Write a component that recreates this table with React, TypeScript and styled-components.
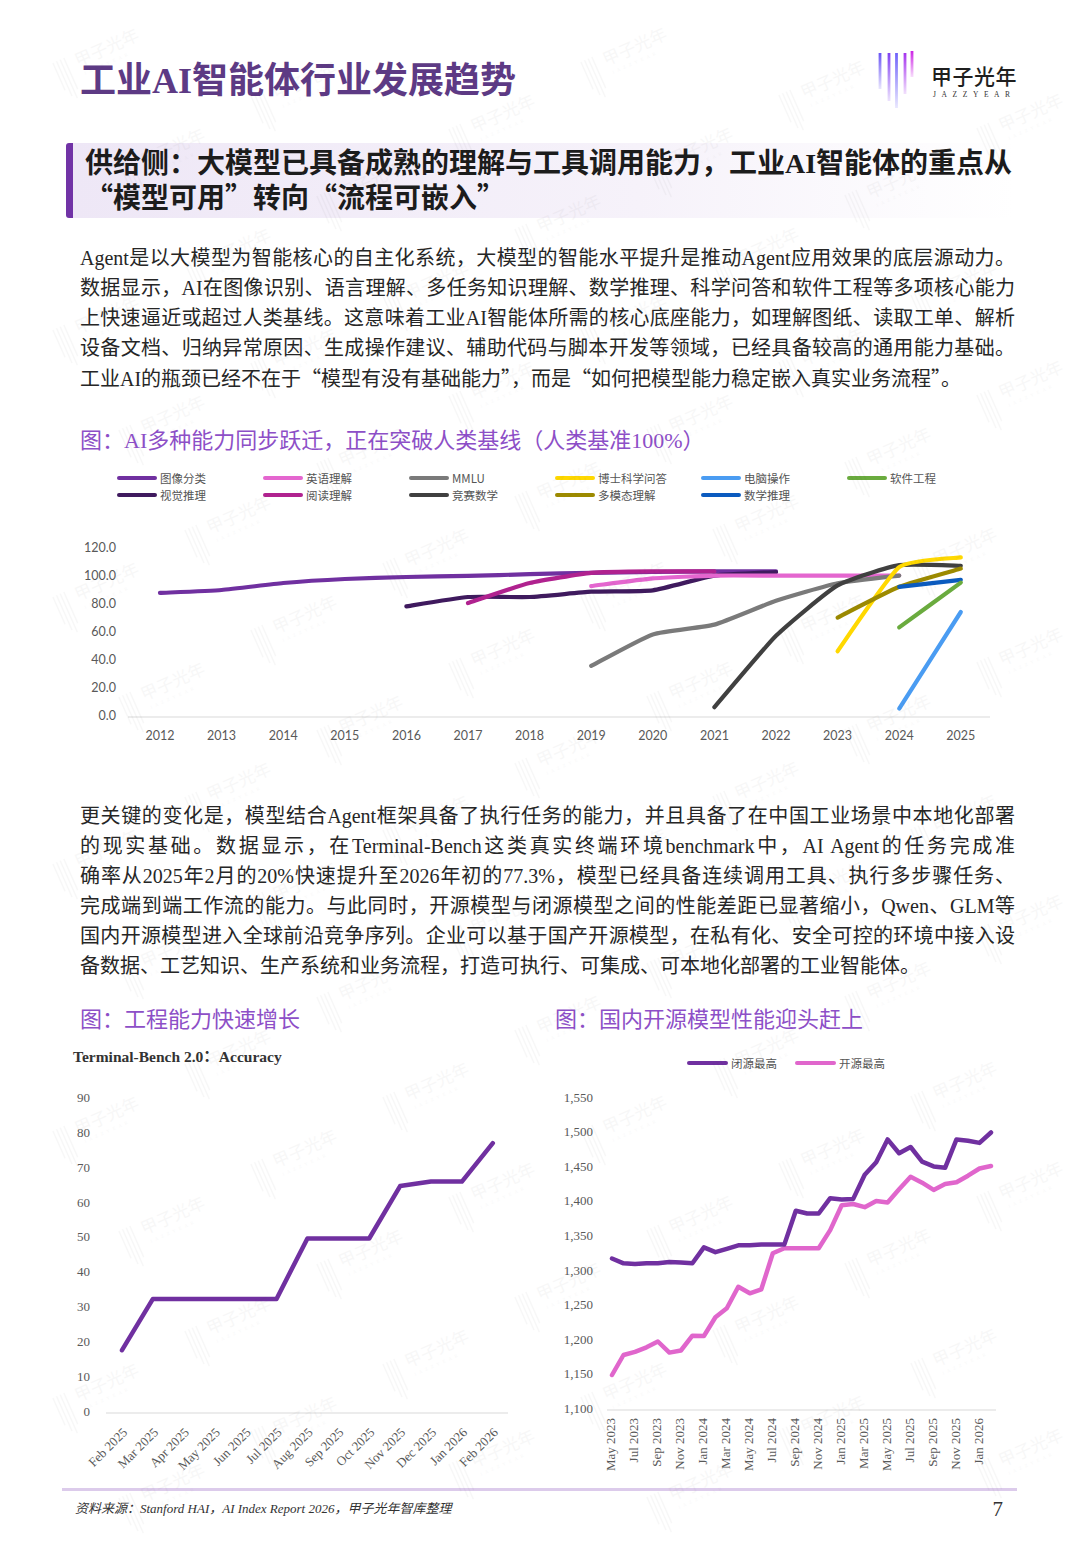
import React from "react";
import styled, { createGlobalStyle } from "styled-components";

type Pt = [number, number];

const SERIF = `"Liberation Serif", "Noto Sans CJK SC", serif`;
const CJK = `"Noto Sans CJK SC", sans-serif`;

const GlobalStyle = createGlobalStyle`
  html, body { margin: 0; padding: 0; background: #fff; }
  body { font-family: ${SERIF}; color: #262626; }
`;

// ---------- helpers ----------
const smooth = (pts: Pt[], k = 10) => {
  let d = `M${pts[0][0]},${pts[0][1]}`;
  for (let i = 0; i < pts.length - 1; i++) {
    const p0 = pts[i - 1] || pts[i];
    const p1 = pts[i];
    const p2 = pts[i + 1];
    const p3 = pts[i + 2] || p2;
    const c1x = p1[0] + (p2[0] - p0[0]) / k;
    const c1y = p1[1] + (p2[1] - p0[1]) / k;
    const c2x = p2[0] - (p3[0] - p1[0]) / k;
    const c2y = p2[1] - (p3[1] - p1[1]) / k;
    d += ` C${c1x.toFixed(1)},${c1y.toFixed(1)} ${c2x.toFixed(1)},${c2y.toFixed(1)} ${p2[0].toFixed(1)},${p2[1].toFixed(1)}`;
  }
  return d;
};
const poly = (pts: Pt[]) =>
  "M" + pts.map((p) => `${p[0].toFixed(1)},${p[1].toFixed(1)}`).join(" L");

// ---------- layout ----------
const Page = styled.div`
  position: relative;
  width: 1080px;
  height: 1560px;
  overflow: hidden;
  background: #fff;
`;

const Header = styled.header`
  display: flex;
  justify-content: space-between;
  align-items: center;
  height: 62px;
  padding: 50px 63px 0 80px;
`;

const Title = styled.h1`
  margin: 0;
  font-family: ${SERIF};
  font-size: 36px;
  line-height: 1;
  font-weight: 700;
  color: #5d3a84;
`;

const Brand = styled.div`
  display: flex;
  align-items: center;
`;

const BrandText = styled.div`
  display: flex;
  flex-direction: column;
  margin-left: 14px;
`;

const BrandName = styled.span`
  font-family: ${CJK};
  font-size: 21px;
  line-height: 24px;
  font-weight: 500;
  letter-spacing: 0.5px;
  color: #1f1f1f;
`;

const BrandSub = styled.span`
  font-family: ${SERIF};
  font-size: 7.5px;
  letter-spacing: 5.6px;
  margin-top: 3px;
  margin-left: 2px;
  color: #333;
`;

const Heading = styled.div`
  margin: 31px 0 0 66px;
  width: 949px;
  height: 75px;
  box-sizing: border-box;
  padding: 4px 0 0 12px;
  border-left: 7px solid #7133a6;
  border-radius: 3px;
  background: linear-gradient(to right, #eee7f6 0%, #f6f2fa 60%, #ffffff 100%);
  font-family: ${SERIF};
  font-size: 28px;
  line-height: 33px;
  font-weight: 700;
  color: #1c1c1c;
  white-space: nowrap;
`;

const Q = styled.span`
  font-family: ${CJK};
`;

const Paragraph = styled.div<{ $top: number }>`
  margin: ${(p) => p.$top}px 0 0 80px;
  width: 935px;
  font-family: ${SERIF};
  font-size: 20px;
  line-height: 30px;
  color: #262626;
`;

const Line = styled.span<{ $last?: boolean }>`
  display: block;
  text-align: justify;
  text-align-last: ${(p) => (p.$last ? "left" : "justify")};
`;

const Caption = styled.div<{ $top?: number; $left?: number }>`
  margin: ${(p) => p.$top ?? 0}px 0 0 ${(p) => p.$left ?? 0}px;
  font-family: ${SERIF};
  font-size: 22px;
  line-height: 30px;
  color: #8d4fc7;
  white-space: nowrap;
`;

const Legend = styled.div`
  display: grid;
  grid-template-columns: repeat(6, 146px);
  grid-auto-rows: 17px;
  margin: 13px 0 0 117px;
`;

const LegendItem = styled.div`
  display: flex;
  align-items: center;
  font-family: ${CJK};
  font-size: 11.5px;
  color: #555;
`;

const Swatch = styled.span<{ $color: string; $w?: number }>`
  display: inline-block;
  width: ${(p) => p.$w ?? 40}px;
  height: 4px;
  border-radius: 2px;
  background: ${(p) => p.$color};
  margin-right: 3px;
`;

const ChartSvg = styled.svg`
  display: block;
  overflow: visible;
`;

const AxisText = styled.text<{ $serif?: boolean }>`
  font-family: ${(p) => (p.$serif ? SERIF : `Lato, "Noto Sans", sans-serif`)};
  font-size: ${(p) => (p.$serif ? "13px" : "12.5px")};
  fill: #595959;
`;

const TwoCols = styled.div<{ $top: number }>`
  display: grid;
  grid-template-columns: 490px 460px;
  margin: ${(p) => p.$top}px 0 0 60px;
`;

const ChartCol = styled.div`
  display: flex;
  flex-direction: column;
`;

const ChartTitle = styled.div`
  margin: 13px 0 4px 13px;
  height: 18px;
  font-family: ${SERIF};
  font-size: 15.5px;
  line-height: 18px;
  font-weight: 700;
  color: #333;
`;

const MiniLegend = styled.div`
  display: flex;
  align-items: center;
  gap: 18px;
  margin: 20px 0 9px 137px;
  height: 16px;
`;

const Rule = styled.div`
  margin: 8px 0 0 62px;
  width: 955px;
  height: 3px;
  background: #dccbeb;
`;

const Footer = styled.footer`
  display: flex;
  justify-content: space-between;
  align-items: center;
  padding: 2px 77px 0 75px;
`;

const Source = styled.span`
  font-family: ${SERIF};
  font-style: italic;
  font-size: 13px;
  color: #333;
`;

const PageNo = styled.span`
  font-family: ${SERIF};
  font-size: 21px;
  color: #333;
  margin-top: 4px;
`;

const Watermarks = styled.svg`
  position: absolute;
  left: 0;
  top: 0;
  pointer-events: none;
`;

// ---------- logo ----------
const Logo: React.FC = () => {
  const bars = [
    { x: 3, y2: 38, c: "#6a55f5" },
    { x: 12, y2: 50, c: "#8140f2" },
    { x: 19.5, y2: 57, c: "#6f62fa" },
    { x: 28, y2: 43, c: "#a533ee" },
    { x: 35, y2: 28, c: "#cc22e6" },
  ];
  return (
    <svg width="40" height="60" viewBox="0 0 40 60">
      <defs>
        {bars.map((b, i) => (
          <linearGradient key={i} id={`lg${i}`} x1="0" y1="0" x2="0" y2="1">
            <stop offset="0" stopColor={b.c} stopOpacity="1" />
            <stop offset="1" stopColor={b.c} stopOpacity="0.15" />
          </linearGradient>
        ))}
      </defs>
      {bars.map((b, i) => (
        <rect key={i} x={b.x - 1.4} y={i === 4 ? 0 : 2} width="2.8" height={b.y2 - 2} fill={`url(#lg${i})`} />
      ))}
    </svg>
  );
};

// ---------- chart 1 ----------
const c1x = (yr: number) => 80 + (yr - 2012) * 61.6;
const c1y = (v: number) => 182 - v * 1.4;

type Series = { name: string; color: string; data: [number, number][] };

const SERIES: Series[] = [
  { name: "图像分类", color: "#7030a0", data: [[2012, 88.6], [2013, 90.7], [2014, 95.7], [2015, 98.6], [2016, 100], [2017, 100.8], [2018, 102], [2019, 103], [2020, 103.6], [2021, 104], [2022, 104]] },
  { name: "视觉推理", color: "#3f1a5e", data: [[2016, 79], [2017, 85.7], [2018, 85.7], [2019, 89.5], [2020, 90.5], [2021, 101], [2022, 103.5]] },
  { name: "英语理解", color: "#e466cf", data: [[2019, 93.5], [2020, 99], [2021, 101], [2022, 101], [2023, 101], [2024, 101]] },
  { name: "阅读理解", color: "#b0228f", data: [[2017, 81.4], [2018, 95.7], [2019, 103], [2020, 104], [2021, 104]] },
  { name: "MMLU", color: "#7a7a7a", data: [[2019, 36.5], [2020, 59], [2021, 66], [2022, 83], [2023, 95.5], [2024, 101]] },
  { name: "竞赛数学", color: "#404040", data: [[2021, 7], [2022, 58], [2023, 94], [2024, 108.5], [2025, 108]] },
  { name: "博士科学问答", color: "#ffd800", data: [[2023, 47], [2024, 107], [2025, 114]] },
  { name: "多模态理解", color: "#9c8a00", data: [[2023, 71], [2024, 93], [2025, 106]] },
  { name: "电脑操作", color: "#4a9cf2", data: [[2024, 6], [2025, 75]] },
  { name: "数学推理", color: "#0b5bbf", data: [[2024, 93], [2025, 98]] },
  { name: "软件工程", color: "#6aab3e", data: [[2024, 64], [2025, 96]] },
];

const LEGEND_ORDER = [
  "图像分类", "英语理解", "MMLU", "博士科学问答", "电脑操作", "软件工程",
  "视觉推理", "阅读理解", "竞赛数学", "多模态理解", "数学推理",
];

const AbilityChart: React.FC = () => {
  const years = Array.from({ length: 14 }, (_, i) => 2012 + i);
  return (
    <ChartSvg width="935" height="220" style={{ marginLeft: 80, marginTop: 32 }}>
      {[0, 20, 40, 60, 80, 100, 120].map((v) => (
        <AxisText key={v} x={36} y={c1y(v)} textAnchor="end" dominantBaseline="middle">
          {v.toFixed(1)}
        </AxisText>
      ))}
      <line x1="48" x2="910" y1={c1y(0)} y2={c1y(0)} stroke="#d9d9d9" strokeWidth="1.2" />
      {years.map((y) => (
        <AxisText key={y} x={c1x(y)} y={202} textAnchor="middle" dominantBaseline="middle">
          {y}
        </AxisText>
      ))}
      {SERIES.map((s) => (
        <path
          key={s.name}
          d={smooth(s.data.map(([yr, v]) => [c1x(yr), c1y(v)] as Pt), 12)}
          fill="none"
          stroke={s.color}
          strokeWidth="4.2"
          strokeLinecap="round"
          strokeLinejoin="round"
        />
      ))}
    </ChartSvg>
  );
};

// ---------- chart 2 (terminal bench) ----------
const TB = [18, 32.7, 32.7, 32.7, 32.7, 32.7, 50, 50, 50, 65, 66.3, 66.3, 77.3];
const TB_LABELS = [
  "Feb 2025", "Mar 2025", "Apr 2025", "May 2025", "Jun 2025", "Jul 2025", "Aug 2025",
  "Sep 2025", "Oct 2025", "Nov 2025", "Dec 2025", "Jan 2026", "Feb 2026",
];
const tx = (i: number) => 62 + 30.9 * i;
const ty = (v: number) => 343 - 3.49 * v;

const BenchChart: React.FC = () => (
  <ChartSvg width="490" height="410">
    {[0, 10, 20, 30, 40, 50, 60, 70, 80, 90].map((v) => (
      <AxisText $serif key={v} x={30} y={ty(v)} textAnchor="end" dominantBaseline="middle">
        {v}
      </AxisText>
    ))}
    <line x1="46" x2="448" y1={ty(0)} y2={ty(0)} stroke="#d9d9d9" strokeWidth="1.2" />
    {TB_LABELS.map((l, i) => (
      <AxisText
        $serif
        key={l}
        transform={`translate(${tx(i) + 4},${361}) rotate(-45)`}
        textAnchor="end"
        dominantBaseline="middle"
      >
        {l}
      </AxisText>
    ))}
    <path
      d={poly(TB.map((v, i) => [tx(i), ty(v)] as Pt))}
      fill="none"
      stroke="#7030a0"
      strokeWidth="4.5"
      strokeLinecap="round"
      strokeLinejoin="round"
    />
  </ChartSvg>
);

// ---------- chart 3 (open vs closed) ----------
const CLOSED = [
  1319, 1312, 1311, 1312, 1312, 1314, 1313, 1312, 1335, 1328, 1333, 1338, 1338, 1339, 1339, 1339,
  1388, 1384, 1384, 1406, 1404, 1405, 1440, 1458, 1491, 1471, 1480, 1459, 1452, 1450, 1491, 1489,
  1486, 1501,
];
const OPEN = [
  1150.6, 1179.5, 1184, 1190.6, 1199, 1183, 1186, 1207.4, 1207, 1234, 1247, 1278, 1268.6, 1274.4,
  1326.4, 1333.6, 1333.6, 1333.6, 1333.6, 1360, 1396, 1397.7, 1393, 1402, 1400, 1419, 1437,
  1428.5, 1418, 1426.6, 1429, 1438.6, 1449, 1452.6,
];
const MONTH_LABELS = [
  "May 2023", "Jul 2023", "Sep 2023", "Nov 2023", "Jan 2024", "Mar 2024", "May 2024", "Jul 2024",
  "Sep 2024", "Nov 2024", "Jan 2025", "Mar 2025", "May 2025", "Jul 2025", "Sep 2025", "Nov 2025",
  "Jan 2026",
];
const mx = (i: number) => 62 + 11.485 * i;
const my = (v: number) => 330 - (v - 1100) * 0.692;

const RaceChart: React.FC = () => (
  <ChartSvg width="460" height="400">
    {Array.from({ length: 10 }, (_, i) => 1100 + i * 50).map((v) => (
      <AxisText $serif key={v} x={43} y={my(v)} textAnchor="end" dominantBaseline="middle">
        {v.toLocaleString("en-US")}
      </AxisText>
    ))}
    <line x1="57" x2="446" y1={my(1100)} y2={my(1100)} stroke="#d9d9d9" strokeWidth="1.2" />
    {MONTH_LABELS.map((l, k) => (
      <AxisText
        $serif
        key={l}
        transform={`translate(${mx(2 * k)},${338}) rotate(-90)`}
        textAnchor="end"
        dominantBaseline="middle"
      >
        {l}
      </AxisText>
    ))}
    <path
      d={poly(OPEN.map((v, i) => [mx(i), my(v)] as Pt))}
      fill="none"
      stroke="#e066cc"
      strokeWidth="4.5"
      strokeLinecap="round"
      strokeLinejoin="round"
    />
    <path
      d={poly(CLOSED.map((v, i) => [mx(i), my(v)] as Pt))}
      fill="none"
      stroke="#7030a0"
      strokeWidth="4.5"
      strokeLinecap="round"
      strokeLinejoin="round"
    />
  </ChartSvg>
);

// ---------- watermark ----------
const marks: Pt[] = [];
for (let i = -12; i <= 12; i++) {
  for (let j = -6; j <= 20; j++) {
    const x = 190 + i * 198 + j * 66;
    const y = 543 + i * 33 + j * 100;
    if (x > 4 && x < 990 && y > 55 && y < 1530) marks.push([x, y]);
  }
}

const WatermarkLayer: React.FC = () => (
  <Watermarks width="1080" height="1560">
    {marks.map(([x, y], k) => (
      <g key={k} transform={`translate(${x},${y}) rotate(-24)`} opacity="0.035">
        {[0, 4, 8, 12].map((bx, n) => (
          <rect key={n} x={bx} y={-14} width="1.3" height={[30, 38, 42, 34][n]} fill="#333" />
        ))}
        <text x="22" y="0" fontFamily={CJK} fontSize="17" fill="#333">
          甲子光年
        </text>
        <text x="25" y="10" fontFamily={SERIF} fontSize="4.5" letterSpacing="3.5" fill="#333">
          JAZZYEAR
        </text>
      </g>
    ))}
  </Watermarks>
);

// ---------- app ----------
export default function App() {
  const byName = Object.fromEntries(SERIES.map((s) => [s.name, s.color]));
  return (
    <>
      <GlobalStyle />
      <Page>
        <Header>
          <Title>工业AI智能体行业发展趋势</Title>
          <Brand>
            <Logo />
            <BrandText>
              <BrandName>甲子光年</BrandName>
              <BrandSub>JAZZYEAR</BrandSub>
            </BrandText>
          </Brand>
        </Header>

        <Heading>
          供给侧：大模型已具备成熟的理解与工具调用能力，工业AI智能体的重点从
          <br />
          <Q>“模型可用”转向“流程可嵌入”</Q>
        </Heading>

        <Paragraph $top={25}>
          <Line>Agent是以大模型为智能核心的自主化系统，大模型的智能水平提升是推动Agent应用效果的底层源动力。</Line>
          <Line>数据显示，AI在图像识别、语言理解、多任务知识理解、数学推理、科学问答和软件工程等多项核心能力</Line>
          <Line>上快速逼近或超过人类基线。这意味着工业AI智能体所需的核心底座能力，如理解图纸、读取工单、解析</Line>
          <Line>设备文档、归纳异常原因、生成操作建议、辅助代码与脚本开发等领域，已经具备较高的通用能力基础。</Line>
          <Line $last>
            工业AI的瓶颈已经不在于<Q>“模型有没有基础能力”</Q>，而是<Q>“如何把模型能力稳定嵌入真实业务流程”</Q>。
          </Line>
        </Paragraph>

        <Caption $top={32} $left={80}>
          图：AI多种能力同步跃迁，正在突破人类基线（人类基准100%）
        </Caption>

        <Legend>
          {LEGEND_ORDER.map((n) => (
            <LegendItem key={n}>
              <Swatch $color={byName[n]} />
              {n}
            </LegendItem>
          ))}
        </Legend>

        <AbilityChart />

        <Paragraph $top={46}>
          <Line>更关键的变化是，模型结合Agent框架具备了执行任务的能力，并且具备了在中国工业场景中本地化部署</Line>
          <Line>的现实基础。数据显示，在Terminal-Bench这类真实终端环境benchmark中，AI Agent的任务完成准</Line>
          <Line>确率从2025年2月的20%快速提升至2026年初的77.3%，模型已经具备连续调用工具、执行多步骤任务、</Line>
          <Line>完成端到端工作流的能力。与此同时，开源模型与闭源模型之间的性能差距已显著缩小，Qwen、GLM等</Line>
          <Line>国内开源模型进入全球前沿竞争序列。企业可以基于国产开源模型，在私有化、安全可控的环境中接入设</Line>
          <Line $last>备数据、工艺知识、生产系统和业务流程，打造可执行、可集成、可本地化部署的工业智能体。</Line>
        </Paragraph>

        <TwoCols $top={24}>
          <Caption $left={20}>图：工程能力快速增长</Caption>
          <Caption $left={5}>图：国内开源模型性能迎头赶上</Caption>
        </TwoCols>

        <TwoCols $top={0}>
          <ChartCol>
            <ChartTitle>Terminal-Bench 2.0：Accuracy</ChartTitle>
            <BenchChart />
          </ChartCol>
          <ChartCol>
            <MiniLegend>
              <LegendItem>
                <Swatch $color="#7030a0" $w={41} />
                闭源最高
              </LegendItem>
              <LegendItem>
                <Swatch $color="#e066cc" $w={41} />
                开源最高
              </LegendItem>
            </MiniLegend>
            <RaceChart />
          </ChartCol>
        </TwoCols>

        <Rule />
        <Footer>
          <Source>资料来源：Stanford HAI，AI Index Report 2026，甲子光年智库整理</Source>
          <PageNo>7</PageNo>
        </Footer>

        <WatermarkLayer />
      </Page>
    </>
  );
}
